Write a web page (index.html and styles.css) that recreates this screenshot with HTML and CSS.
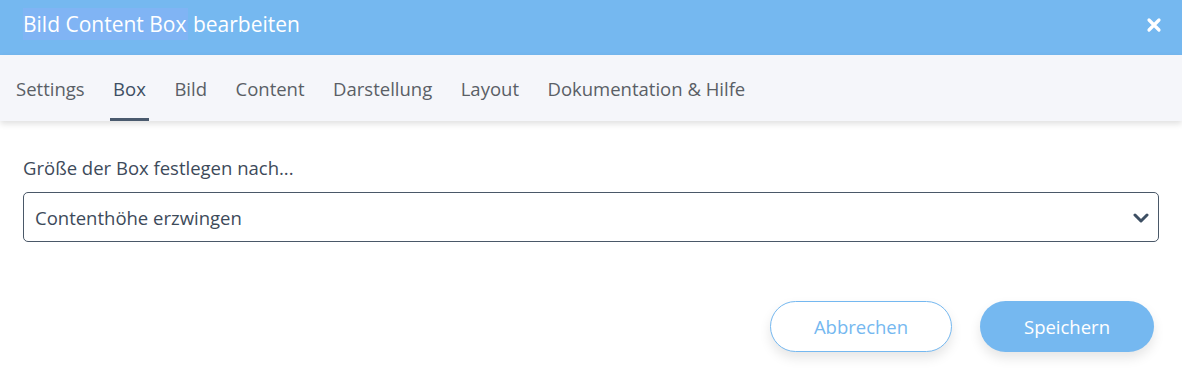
FILE: index.html
```html
<!DOCTYPE html>
<html lang="de">
<head>
  <meta charset="UTF-8">
  <title>Bild Content Box bearbeiten</title>
  <link rel="stylesheet" href="styles.css">
</head>
<body>
  <div class="modal">
    <!-- Header -->
    <div class="modal-header">
      <h1><span class="selected">Bild Content Box</span> bearbeiten</h1>
      <button type="button" class="close" aria-label="Schließen">
        <svg width="16" height="16" viewBox="0 0 16 16">
          <path d="M3 3 L13 13 M13 3 L3 13" stroke="#fff" stroke-width="3.2" stroke-linecap="round"/>
        </svg>
      </button>
    </div>

    <!-- Tabs -->
    <nav class="tabs">
      <a href="#">Settings</a>
      <a href="#" class="active">Box</a>
      <a href="#">Bild</a>
      <a href="#">Content</a>
      <a href="#">Darstellung</a>
      <a href="#">Layout</a>
      <a href="#">Dokumentation &amp; Hilfe</a>
    </nav>

    <!-- Body -->
    <div class="modal-body">
      <label for="boxSize">Größe der Box festlegen nach...</label>
      <div class="select-wrap">
        <select id="boxSize">
          <option>Contenthöhe erzwingen</option>
        </select>
        <svg class="chevron" width="16" height="10" viewBox="0 0 16 10">
          <path d="M2 2 L8 8 L14 2" fill="none" stroke="#3d4f63" stroke-width="3" stroke-linecap="round" stroke-linejoin="round"/>
        </svg>
      </div>
    </div>

    <!-- Footer -->
    <div class="modal-footer">
      <button type="button" class="btn btn-outline">Abbrechen</button>
      <button type="button" class="btn btn-primary">Speichern</button>
    </div>
  </div>
</body>
</html>
```

FILE: styles.css
```css
body {
  margin: 0;
  font-family: 'Open Sans', sans-serif;
  background: #fff;
  color: #3d4a5a;
}
.modal {
  width: 1182px;
  height: 378px;
  background: #fff;
  overflow: hidden;
}
.modal-header {
  height: 55px;
  background: #75b8f0;
  display: flex;
  align-items: center;
  justify-content: space-between;
  padding: 0 23px;
}
.modal-header h1 {
  margin: 0;
  font-size: 21px;
  font-weight: 400;
  color: #fff;
  line-height: 32px;
  margin-top: -8px;
}
.modal-header .selected {
  background: #80b4f4;
  padding: 2px 1px 2px 0;
}
.close {
  background: transparent;
  border: none;
  padding: 0;
  margin-right: -3px;
  margin-top: -6px;
  display: flex;
  cursor: pointer;
}
.tabs {
  height: 66px;
  background: #f5f6fa;
  display: flex;
  align-items: stretch;
  gap: 22.5px;
  padding: 0 13px;
  box-shadow: 0 3px 6px rgba(0, 0, 0, 0.12);
  position: relative;
}
.tabs a {
  display: flex;
  align-items: center;
  font-size: 18.5px;
  color: #5a5f66;
  text-decoration: none;
  border-bottom: 3px solid transparent;
  padding: 3px 3px 0;
}
.tabs a.active {
  color: #3d4f63;
  border-bottom-color: #4a5a6e;
}
.modal-body {
  padding: 34px 23px 0;
}
.modal-body label {
  display: block;
  font-size: 18.5px;
  color: #3d4a5a;
  margin-bottom: 11px;
  line-height: 26px;
}
.select-wrap {
  position: relative;
}
.select-wrap select {
  width: 100%;
  height: 50px;
  appearance: none;
  -webkit-appearance: none;
  border: 1px solid #4a5868;
  border-radius: 5px;
  background: #fff;
  padding: 0 11px;
  font-family: 'Open Sans', sans-serif;
  font-size: 18.5px;
  color: #3d4a5a;
}
.chevron {
  position: absolute;
  right: 10px;
  top: 21px;
  pointer-events: none;
}
.modal-footer {
  display: flex;
  justify-content: flex-end;
  gap: 28px;
  padding: 59px 28px 0 0;
}
.btn {
  height: 51px;
  border-radius: 26px;
  font-family: 'Open Sans', sans-serif;
  font-size: 18.5px;
  cursor: pointer;
  box-shadow: 0 6px 12px rgba(0, 0, 0, 0.1);
}
.btn-outline {
  width: 182px;
  background: #fff;
  color: #75b8f0;
  border: 1px solid #75b8f0;
}
.btn-primary {
  width: 174px;
  background: #75b8f0;
  color: #fff;
  border: none;
}
```
